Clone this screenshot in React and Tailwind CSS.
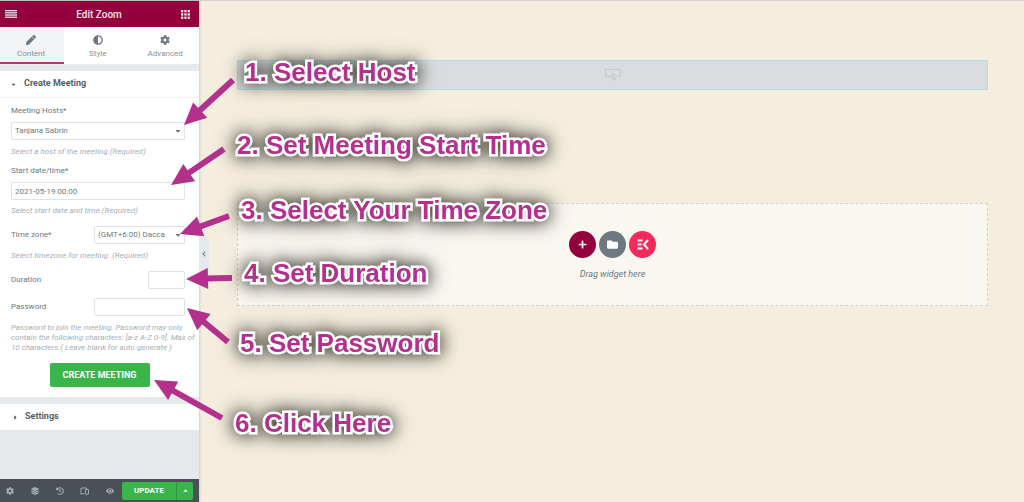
import React, { useState } from "react";
import { FaPen, FaAdjust, FaCog, FaLayerGroup, FaHistory, FaEye, FaCaretDown, FaCaretRight, FaCaretUp, FaFolder, FaPlus, FaChevronLeft } from "react-icons/fa";

const tabs = [
  { id: "content", label: "Content", icon: FaPen },
  { id: "style", label: "Style", icon: FaAdjust },
  { id: "advanced", label: "Advanced", icon: FaCog },
];

const steps = [
  { text: "1. Select Host", place: "left-[245px] top-[56px]" },
  { text: "2. Set Meeting Start Time", place: "left-[237px] top-[129px]" },
  { text: "3. Select Your Time Zone", place: "left-[241px] top-[194px]" },
  { text: "4. Set Duration", place: "left-[244px] top-[257px]" },
  { text: "5. Set Password", place: "left-[240px] top-[327px]" },
  { text: "6. Click Here", place: "left-[235px] top-[407px]" },
];

// tail x, tail y, tip x, tip y
const arrows = [
  [233, 79, 184, 124],
  [224, 148, 171, 184],
  [229, 215, 180, 233],
  [232, 277, 186, 278],
  [228, 341, 187, 307],
  [222, 417, 154, 379],
];

const MenuIcon = () => (
  <svg width="12" height="8" viewBox="0 0 12 8" fill="#fff" fillOpacity="0.9">
    <rect width="12" height="1.3" />
    <rect y="2.2" width="12" height="1.3" />
    <rect y="4.4" width="12" height="1.3" />
    <rect y="6.6" width="12" height="1.3" />
  </svg>
);

const AppsIcon = () => (
  <svg width="9" height="9" viewBox="0 0 9 9" fill="#fff" fillOpacity="0.9">
    {[0, 3.3, 6.6].map((y) =>
      [0, 3.3, 6.6].map((x) => <rect key={`${x}-${y}`} x={x} y={y} width="2.3" height="2.3" />)
    )}
  </svg>
);

const DevicesIcon = () => (
  <svg width="9" height="8" viewBox="0 0 18 16" fill="none" stroke="currentColor" strokeWidth="2">
    <path d="M2 11V2h11v2M0 13.5h9" />
    <rect x="11" y="5" width="6" height="9.5" rx="1" />
  </svg>
);

const KitIcon = () => (
  <svg width="12" height="11" viewBox="0 0 24 22" fill="none" stroke="#fff" strokeWidth="4">
    <path d="M1 3h10M1 11h8M1 19h10" />
    <path d="M22 2l-8 9 8 9" />
  </svg>
);

const CursorBoxIcon = () => (
  <svg width="16" height="12" viewBox="0 0 16 12" fill="none" stroke="#c5c9ca" strokeWidth="1">
    <path d="M6.500 7.500H.5v-7h15v7h-3" />
    <path d="M7.500 4.500l4 3.500-2 .3 1.200 2.500-1.300.6-1-2.600-1.200 1.200z" />
  </svg>
);

const Help = ({ children, className }) => (
  <p className={`text-[8px] leading-[10px] italic text-[#a4afb7] ${className}`}>{children}</p>
);

const Sidebar = () => {
  const [activeTab, setActiveTab] = useState("content");
  const [host, setHost] = useState("Tanjana Sabrin");
  const [start, setStart] = useState("2021-05-19 00:00");
  const [zone, setZone] = useState("(GMT+6:00) Dacca");

  const field = "h-[18px] rounded-xs border border-[#dfe3e6] bg-white px-[3px] text-[8px] text-[#6d7882] outline-none";

  return (
    <aside className="relative flex w-[199px] shrink-0 flex-col bg-[#e6e9ec] shadow-[0_0_3px_rgba(0,0,0,0.25)]">
      <header className="flex h-[26px] items-center justify-between bg-[#93003c] pl-[5px] pr-[9px]">
        <button aria-label="Menu"><MenuIcon /></button>
        <h1 className="text-[10px] font-medium text-white/90">Edit Zoom</h1>
        <button aria-label="Widgets"><AppsIcon /></button>
      </header>

      <nav className="grid h-[37px] grid-cols-[64px_1fr_1fr] bg-white">
        {tabs.map(({ id, label, icon: Icon }) => (
          <button
            key={id}
            onClick={() => setActiveTab(id)}
            className={`flex flex-col items-center border-b-2 pt-[8px] text-[#6d7882] ${activeTab === id ? "border-[#b5366a] bg-[#f1f3f5] pr-[2px]" : "border-transparent"}`}
          >
            <Icon className="text-[10px]" />
            <span className="mt-1 text-[8px] leading-[10px] text-[#87919a]">{label}</span>
          </button>
        ))}
      </nav>

      <section className="mt-[7px] bg-white">
        <button className="flex h-[27px] w-full items-center border-b border-[#eef0f2] pl-[10px] text-[9px] font-bold text-[#556068]">
          <FaCaretDown className="mr-[7px] text-[7px]" />
          Create Meeting
        </button>

        <form className="px-[11px] pb-[10px] pt-2 pr-[14px] text-[8px] leading-[10px] text-[#6d7882]" onSubmit={(e) => e.preventDefault()}>
          <label htmlFor="host" className="block">Meeting Hosts*</label>
          <div className="relative mt-[6px]">
            <select id="host" value={host} onChange={(e) => setHost(e.target.value)} className={`${field} block w-full appearance-none`}>
              <option>Tanjana Sabrin</option>
            </select>
            <FaCaretDown className="pointer-events-none absolute right-[3px] top-[5px] text-[8px]" />
          </div>
          <Help className="mt-[7px]">Select a host of the meeting.(Required)</Help>

          <label htmlFor="start" className="mt-[9px] block">Start date/time*</label>
          <input id="start" value={start} onChange={(e) => setStart(e.target.value)} className={`${field} mt-[6px] block w-full`} />
          <Help className="mt-[6px]">Select start date and time.(Required)</Help>

          <div className="mt-[10px] flex items-center justify-between">
            <label htmlFor="zone">Time zone*</label>
            <div className="relative w-[91px]">
              <select id="zone" value={zone} onChange={(e) => setZone(e.target.value)} className={`${field} block w-full appearance-none`}>
                <option>(GMT+6:00) Dacca</option>
              </select>
              <FaCaretDown className="pointer-events-none absolute right-[3px] top-[5px] text-[8px]" />
            </div>
          </div>
          <Help className="mt-[7px]">Select timezone for meeting .(Required)</Help>

          <div className="mt-[10px] flex items-center justify-between">
            <label htmlFor="duration">Duration</label>
            <input id="duration" className={`${field} w-[37px]`} />
          </div>
          <div className="mt-[9px] flex items-center justify-between">
            <label htmlFor="password">Password</label>
            <input id="password" className={`${field} w-[91px]`} />
          </div>
          <Help className="mt-[7px] whitespace-nowrap">
            Password to join the meeting. Password may only<br />
            contain the following characters: [a-z A-Z 0-9]. Max of<br />
            10 characters.( Leave blank for auto generate )
          </Help>

          <div className="-mr-[3px] mt-[10px] flex justify-center">
            <button className="h-6 w-[100px] rounded-xs bg-[#39b54a] text-[9px] font-bold text-white">CREATE MEETING</button>
          </div>
        </form>
      </section>

      <section className="mt-[7px] bg-white">
        <button className="flex h-[26px] w-full items-center pl-3 text-[9px] font-bold text-[#556068]">
          <FaCaretRight className="mr-[6px] text-[7px]" />
          Settings
        </button>
      </section>

      <footer className="mt-auto flex h-[23px] items-center bg-[#495157] pl-[6px] pr-[6px] text-[#a4afb7]">
        <div className="flex flex-1 items-center justify-between pr-2 text-[8px]">
          <button aria-label="Settings"><FaCog /></button>
          <button aria-label="Navigator"><FaLayerGroup /></button>
          <button aria-label="History"><FaHistory /></button>
          <button aria-label="Responsive mode"><DevicesIcon /></button>
          <button aria-label="Preview"><FaEye /></button>
        </div>
        <button className="h-[18px] w-[54px] rounded-l-xs bg-[#39b54a] text-[8px] font-bold text-white">UPDATE</button>
        <button aria-label="Save options" className="flex h-[18px] w-[17px] items-center justify-center rounded-r-xs border-l border-[#2f963d] bg-[#39b54a] text-[7px] text-white">
          <FaCaretUp />
        </button>
      </footer>

      <button aria-label="Hide panel" className="absolute left-full top-[236px] flex h-[34px] w-[10px] items-center justify-center rounded-r-xs bg-[#e6e9ec] text-[6px] text-[#6d7882]">
        <FaChevronLeft />
      </button>
    </aside>
  );
};

const Canvas = () => (
  <main className="flex-1 bg-[#f5eedf] pl-[38px] pr-9 pt-[59px]">
    <div className="flex h-[30px] items-center justify-center border border-[#aee0e8] bg-[#d9dddf]">
      <CursorBoxIcon />
    </div>
    <div className="mt-[113px] flex h-[103px] flex-col items-center border border-dashed border-[#cdd2d4] bg-[#faf7f0] pt-[27px]">
      <div className="flex gap-[3px] text-white">
        <button aria-label="Add section" className="flex size-[27px] items-center justify-center rounded-full bg-[#93003c] text-[9px]"><FaPlus /></button>
        <button aria-label="Add template" className="flex size-[27px] items-center justify-center rounded-full bg-[#6d7882] text-[11px]"><FaFolder /></button>
        <button aria-label="Element kit" className="flex size-[27px] items-center justify-center rounded-full bg-[#f5295c]"><KitIcon /></button>
      </div>
      <p className="mt-[10px] text-[9px] leading-[12px] italic text-[#6d7882]">Drag widget here</p>
    </div>
  </main>
);

const Arrow = ({ points: [x1, y1, x2, y2] }) => {
  const length = Math.hypot(x2 - x1, y2 - y1);
  const angle = (Math.atan2(y2 - y1, x2 - x1) * 180) / Math.PI;
  return (
    <g transform={`translate(${x2} ${y2}) rotate(${angle})`} fill="#b3308c">
      <rect x={-length} y="-3" width={length - 18} height="6" />
      <path d="M0 0L-22 -10.500V10.500Z" />
    </g>
  );
};

// Numbered callouts drawn over the editor
const Walkthrough = () => (
  <div className="pointer-events-none absolute inset-0 overflow-hidden">
    {steps.map((step) => (
      <p
        key={step.text}
        className={`absolute whitespace-nowrap font-['Liberation_Sans',Arial,sans-serif] text-[26px] leading-[30px] font-bold text-[#b3308c] [paint-order:stroke_fill] [-webkit-text-stroke:5px_white] [filter:drop-shadow(0_0_8px_rgba(40,40,30,0.8))_drop-shadow(0_0_10px_rgba(40,40,30,0.4))] ${step.place}`}
      >
        {step.text}
      </p>
    ))}
    <svg className="absolute left-0 top-0" width="240" height="430">
      {arrows.map((points) => <Arrow key={points.join()} points={points} />)}
    </svg>
  </div>
);

export default function App() {
  return (
    <div className="relative flex min-h-screen border-t border-[#d2cccb] font-[Roboto,sans-serif]">
      <Sidebar />
      <Canvas />
      <Walkthrough />
    </div>
  );
}
